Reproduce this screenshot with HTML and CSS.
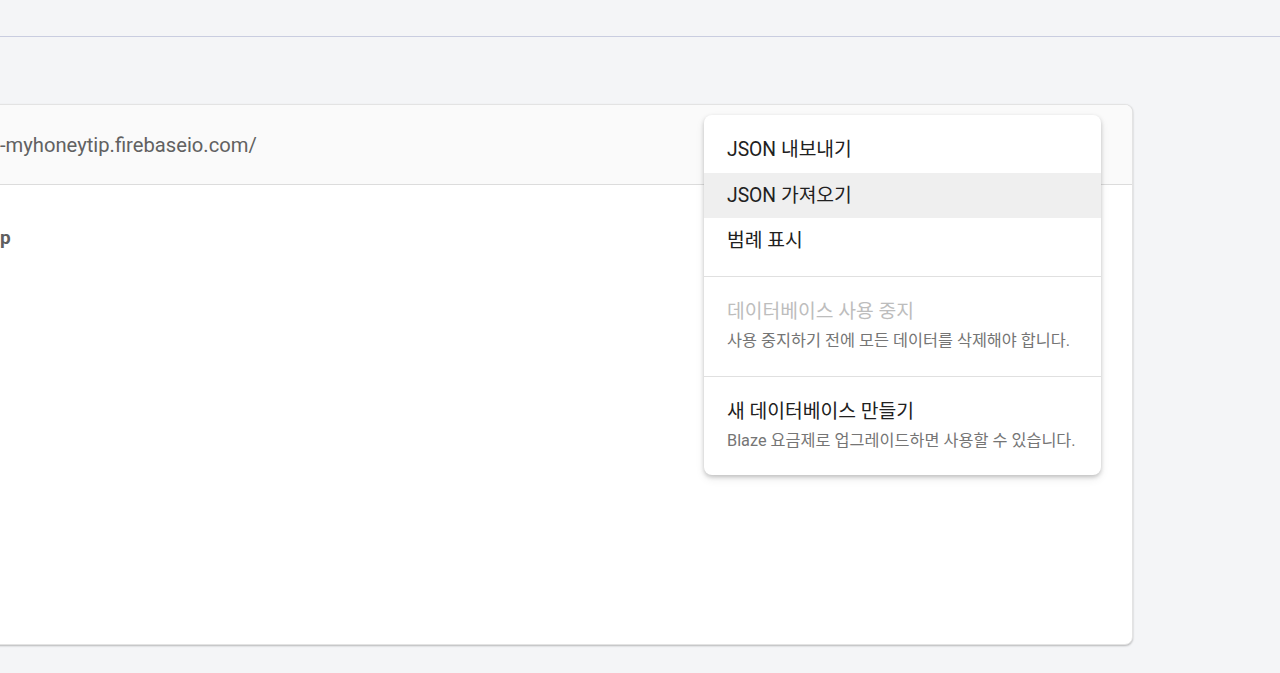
FILE: index.html
```html
<!DOCTYPE html>
<html lang="ko">
<head>
<meta charset="utf-8">
<link rel="stylesheet" href="styles.css">
</head>
<body>
<div class="topbar"></div>
<main class="content">
  <section class="card">
    <div class="card-head">
      <span class="url">-myhoneytip.firebaseio.com/</span>
    </div>
    <div class="card-body">
      <span class="node">p</span>
    </div>
  </section>
  <div class="menu">
    <div class="menu-group">
      <div class="menu-item">JSON 내보내기</div>
      <div class="menu-item active">JSON 가져오기</div>
      <div class="menu-item">범례 표시</div>
    </div>
    <div class="menu-group two">
      <div class="menu-item tall">
        <div class="title disabled">데이터베이스 사용 중지</div>
        <div class="sub">사용 중지하기 전에 모든 데이터를 삭제해야 합니다.</div>
      </div>
    </div>
    <div class="menu-group two last">
      <div class="menu-item tall">
        <div class="title">새 데이터베이스 만들기</div>
        <div class="sub">Blaze 요금제로 업그레이드하면 사용할 수 있습니다.</div>
      </div>
    </div>
  </div>
</main>
</body>
</html>
```

FILE: styles.css
```css
* { box-sizing: border-box; }
html, body {
  margin: 0;
  height: 100%;
  overflow: hidden;
}
body {
  background: #f4f5f7;
  font-family: Roboto, "Noto Sans CJK KR", sans-serif;
  color: #212121;
  position: relative;
}
.topbar {
  height: 37px;
  border-bottom: 1px solid #c9cde0;
}
.content {
  position: relative;
  padding-top: 67px;
}
.card {
  margin-left: -30px;
  width: 1163px;
  height: 541px;
  background: #fff;
  border-radius: 8px;
  border: 1px solid #e3e3e3;
  box-shadow: 0 1px 2px rgba(0,0,0,0.25);
  overflow: hidden;
}
.card-head {
  height: 80px;
  background: #fafafa;
  border-bottom: 1px solid #dcdcdc;
  display: flex;
  align-items: center;
  padding-left: 29px;
}
.url {
  font-size: 20.2px;
  color: #616161;
  white-space: nowrap;
}
.card-body {
  padding: 41px 0 0 29px;
}
.node {
  font-size: 19px;
  font-weight: 700;
  color: #5f5f5f;
}
.menu {
  position: absolute;
  left: 704px;
  top: 78px;
  width: 397px;
  background: #fff;
  border-radius: 8px;
  box-shadow: 0 2px 4px rgba(0,0,0,0.2), 0 4px 10px rgba(0,0,0,0.08);
}
.menu-group {
  padding: 12px 0;
}
.menu-group + .menu-group {
  border-top: 1px solid #e0e0e0;
}
.menu-group.two { padding: 14px 0 13px; }
.menu-group.last { padding-bottom: 12px; }
.menu-item {
  height: 45.5px;
  display: flex;
  align-items: center;
  padding: 0 23px 3px;
  font-size: 19.3px;
  color: #212121;
}
.menu-item.active { background: #efefef; }
.menu-item.tall {
  height: auto;
  flex-direction: column;
  align-items: flex-start;
  padding: 8px 23px 6.5px;
}
.title { font-size: 19.3px; line-height: 26px; }
.title.disabled { color: #bdbdbd; }
.sub {
  font-size: 16.3px;
  line-height: 31px;
  margin-top: 0.5px;
  color: #757575;
}
```
